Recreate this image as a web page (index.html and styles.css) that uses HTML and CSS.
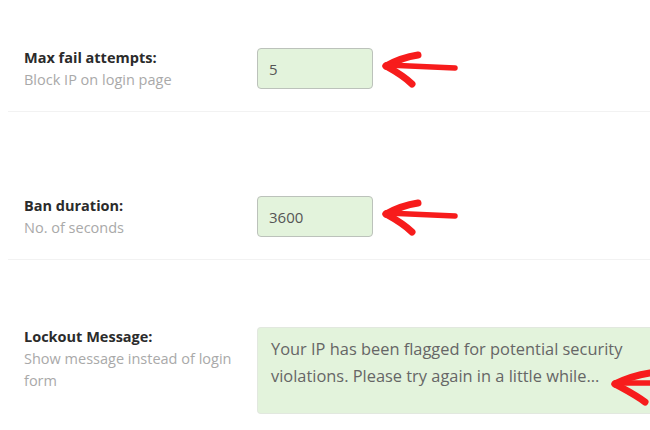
FILE: index.html
```html
<!DOCTYPE html>
<html>
<head>
<meta charset="utf-8">
<link rel="stylesheet" href="styles.css">
</head>
<body>
<div class="settings">
  <div class="row row-first">
    <div class="label">
      <div class="title">Max fail attempts:</div>
      <div class="desc">Block IP on login page</div>
    </div>
    <div class="field">
      <input class="input" type="text" value="5" readonly>
      <svg class="arrow arrow-input" width="80" height="40" viewBox="0 0 80 40">
        <path d="M5 17 C 14 12, 24 8, 37 6" />
        <path d="M5 17 C 14 22, 24 28, 31 35" />
        <path class="shaft" d="M6 16 C 28 17, 52 18, 74 19" />
      </svg>
    </div>
  </div>
  <div class="row row-second">
    <div class="label">
      <div class="title">Ban duration:</div>
      <div class="desc">No. of seconds</div>
    </div>
    <div class="field">
      <input class="input" type="text" value="3600" readonly>
      <svg class="arrow arrow-input" width="80" height="40" viewBox="0 0 80 40">
        <path d="M5 17 C 14 12, 24 8, 37 6" />
        <path d="M5 17 C 14 22, 24 28, 31 35" />
        <path class="shaft" d="M6 16 C 28 17, 52 18, 74 19" />
      </svg>
    </div>
  </div>
  <div class="row row-third">
    <div class="label">
      <div class="title">Lockout Message:</div>
      <div class="desc">Show message instead of login form</div>
    </div>
    <div class="field field-wide">
      <textarea class="textarea" readonly>Your IP has been flagged for potential security violations. Please try again in a little while...</textarea>
      <svg class="arrow arrow-text" width="40" height="40" viewBox="0 0 40 40">
        <path d="M5 17 C 15 12, 27 8, 40 6" />
        <path d="M5 17 C 14 22, 26 28, 35 35" />
        <path class="shaft" d="M6 16 C 18 16, 28 16, 40 16" />
      </svg>
    </div>
  </div>
</div>
</body>
</html>
```
FILE: styles.css
```css
html, body {
  overflow: hidden;
}
body {
  margin: 8px 0 0 8px;
  background: #ffffff;
  font-family: "Open Sans", "Noto Sans", sans-serif;
}
.settings {
  display: flex;
  flex-direction: column;
}
.row {
  display: flex;
  align-items: flex-start;
  padding: 0 0 20px 16px;
  border-bottom: 1px solid #f2f2f2;
}
.row-first { padding-top: 40px; }
.row-second { padding-top: 84px; }
.row-third { padding-top: 67px; border-bottom: none; }
.label {
  width: 222px;
  flex: none;
  margin-right: 11px;
  margin-top: -1px;
  line-height: 22px;
  font-size: 14.5px;
}
.title {
  font-weight: 700;
  color: #2b2b2b;
}
.desc {
  color: #a9a9a9;
}
.field {
  position: relative;
}
.field-wide {
  flex: 1;
}
.input {
  display: block;
  box-sizing: border-box;
  width: 116px;
  height: 41px;
  padding: 0 11px;
  margin: 0;
  border: 1px solid #bcc2bb;
  border-radius: 4px;
  background: #e3f3dc;
  color: #555555;
  font-family: "Open Sans", "Noto Sans", sans-serif;
  font-size: 15px;
  outline: none;
}
.textarea {
  display: block;
  box-sizing: border-box;
  width: 100%;
  height: 87px;
  padding: 7px 0 7px 13px;
  margin: 0;
  border: 1px solid #e2e8df;
  border-right: none;
  border-radius: 4px 0 0 4px;
  background: #e3f3dc;
  color: #666666;
  font-family: "Open Sans", "Noto Sans", sans-serif;
  font-size: 16.4px;
  line-height: 27px;
  resize: none;
  overflow: hidden;
  outline: none;
}
.arrow {
  position: absolute;
  fill: none;
  stroke: #f71c1c;
  stroke-width: 7;
  stroke-linecap: round;
  stroke-linejoin: round;
}
.arrow .shaft {
  stroke-width: 5.5;
}
.arrow-input {
  left: 124px;
  top: 1px;
}
.arrow-text {
  right: 0;
  top: 40px;
}
```
